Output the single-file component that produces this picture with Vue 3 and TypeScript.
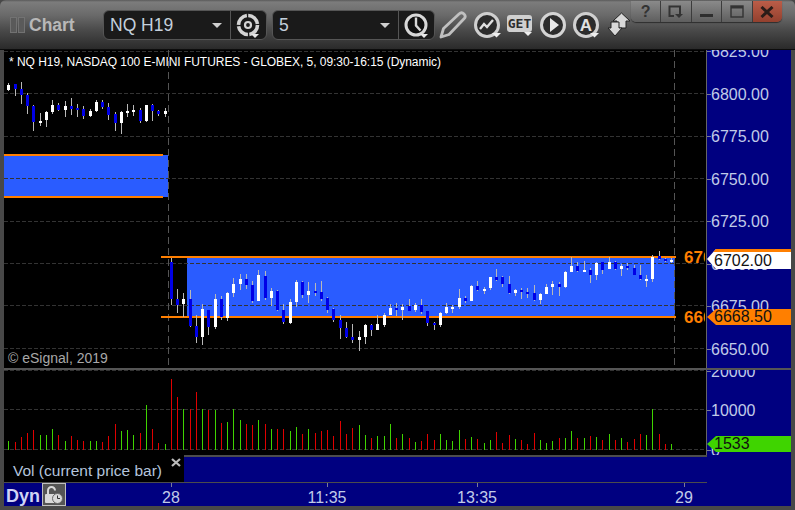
<script setup lang="ts">
type Raw = [number, number, number, number, number, number];
interface Candle { x: number; wt: number; wb: number; bt: number; bh: number; up: boolean }

function candles(ox: number, oy: number, rows: Raw[]): Candle[] {
  return rows.map(([x, wt, wb, bt, bb, w]) => ({
    x: Math.floor(ox + x / 3),
    wt: oy + wt / 3,
    wb: oy + wb / 3,
    bt: oy + bt / 3,
    bh: (bb - bt) / 3,
    up: w === 1,
  }));
}

const session1: Raw[] = [
  [25,39,63,45,60,1],[46,42,78,42,57,0],[64,36,102,57,75,0],[82,69,132,75,108,0],[100,105,183,108,156,0],
  [121,129,168,153,159,1],[139,123,171,126,150,1],[157,90,132,105,126,1],[175,99,123,105,120,0],[196,93,141,108,120,1],
  [214,84,135,108,117,0],[232,102,141,114,120,0],[250,108,147,117,138,0],[271,117,141,123,138,1],[289,90,126,96,123,1],
  [307,90,117,96,111,0],[325,99,150,111,135,0],[346,126,183,132,159,0],[364,123,192,126,159,1],[382,102,141,123,129,1],
  [400,105,138,120,126,1],[421,114,159,120,153,0],[439,105,156,105,153,1],[457,102,153,105,123,0],[475,120,138,123,132,0],
  [496,114,141,123,132,1],
];
const session2a: Raw[] = [
  [64,54,195,66,177,0],[82,147,219,177,195,0],[100,159,231,177,192,1],[121,150,261,177,258,0],[139,225,309,258,291,0],
  [157,192,315,207,291,1],[175,210,285,210,261,0],[196,162,267,177,261,1],[214,168,240,177,231,0],[232,156,243,159,234,1],
  [250,114,171,132,159,1],[271,102,150,117,132,1],[289,102,147,117,135,0],[307,123,189,135,183,0],[325,90,183,105,183,1],
  [346,93,180,108,174,0],[364,144,198,153,174,1],[382,150,213,153,210,0],[400,192,252,210,246,0],[421,177,252,186,249,1],
  [439,120,201,126,186,1],[457,123,174,126,165,0],[475,126,189,153,165,1],[496,129,168,153,159,0],[514,123,183,156,177,0],
  [532,171,219,174,210,0],[550,204,246,207,240,0],[571,225,297,240,264,0],[589,246,294,264,291,0],[607,252,309,291,300,0],
  [628,273,333,291,300,1],[646,252,312,255,291,1],[664,252,288,255,270,0],[682,225,270,252,270,1],[703,219,261,225,255,1],
  [721,192,225,204,225,1],[739,189,228,204,210,0],[757,192,240,201,210,1],[778,177,213,198,213,0],[796,189,216,195,210,1],
];
const session2b: Raw[] = [
  [4,177,222,195,216,0],[22,213,258,213,249,0],[43,246,270,249,255,0],[61,216,261,219,255,1],[79,189,222,201,219,1],
  [97,195,219,201,207,1],[118,147,207,174,201,1],[136,168,189,174,183,0],[154,135,183,138,183,1],[172,123,153,138,150,0],
  [193,141,162,147,153,1],[211,111,150,111,144,1],[229,87,123,111,120,0],[247,108,141,111,132,0],[268,108,162,132,159,0],
  [286,147,168,150,159,1],[304,144,177,150,156,0],[322,144,174,156,162,0],[343,135,183,159,180,0],[361,159,192,162,180,1],
  [379,132,162,141,162,1],[397,123,165,132,141,1],[418,126,168,132,141,0],[436,93,144,96,141,1],[454,51,96,78,96,1],
  [472,66,96,78,93,0],[493,63,96,90,96,1],[511,84,129,90,105,0],[529,66,120,69,105,1],[547,66,102,66,90,0],
  [568,51,87,66,87,1],[586,63,90,66,87,0],[604,72,108,78,87,1],[622,69,90,78,84,0],[643,75,105,84,105,0],
  [661,75,120,105,117,0],[679,105,141,117,123,1],[697,45,126,51,117,1],[718,33,60,48,57,0],[736,54,66,57,63,0],
  [754,54,69,60,66,1],
];
const allCandles: Candle[] = [
  ...candles(0, 70, session1),
  ...candles(150, 240, session2a),
  ...candles(420, 240, session2b),
];

type RawVol = [number, number, number];
function bars(ox: number, rows: RawVol[]) {
  return rows.map(([x, top, g]) => ({ x: Math.floor(ox + x / 3), y: 365 + top / 3, h: (255 - top) / 3, g: g === 1 }));
}
const volBars = [
  ...bars(0, [[25,228,1],[46,231,0],[64,216,0],[82,204,0],[100,195,0],[121,210,1],[139,210,1],[157,192,1],[175,210,0],[196,228,1],[214,213,0],[232,225,0],[250,228,0],[271,228,1],[289,228,1],[307,231,0],[325,213,0],[346,177,0],[364,198,1],[382,195,1],[400,210,1],[421,204,0],[439,120,1],[457,192,0],[475,234,0],[496,237,1],[514,42,0],[532,96,0],[550,132,1],[571,132,0],[589,81,0],[607,132,1],[625,135,0],[646,135,1],[664,174,0],[682,171,1],[700,132,1],[721,165,1],[739,177,0],[757,180,0],[775,165,1],[796,177,0]]),
  ...bars(265, [[19,192,1],[37,192,0],[55,192,0],[76,198,1],[94,186,1],[112,207,0],[130,192,1],[151,204,0],[169,198,0],[187,195,0],[205,213,0],[226,168,0],[244,207,0],[262,189,0],[283,180,1],[301,210,1],[319,219,0],[337,213,1],[358,213,1],[376,177,1],[394,219,0],[412,207,1],[433,219,0],[451,231,1],[469,228,0],[487,207,0],[508,225,0],[526,207,1],[544,225,1],[562,228,1],[583,195,1],[601,222,0],[619,216,1],[637,222,0],[658,234,1],[676,225,1],[694,201,0],[712,234,0],[733,210,0],[751,222,1],[769,225,0],[787,237,0],[808,204,0]]),
  ...bars(530, [[31,225,1],[49,234,1],[67,228,1],[88,219,0],[106,219,1],[124,198,1],[142,219,0],[163,219,1],[181,213,0],[199,216,1],[217,225,0],[238,207,1],[256,225,0],[274,219,1],[292,231,0],[313,222,0],[331,207,0],[349,210,1],[367,132,1],[388,207,0],[406,237,0],[424,237,1]]),
];

const priceGrid = [51, 93.5, 136, 178.5, 221, 263.5, 305.5, 348.5];
const priceLabels = [
  { t: '6825.00', y: 51 }, { t: '6800.00', y: 93.5 }, { t: '6775.00', y: 136 }, { t: '6750.00', y: 178.5 },
  { t: '6725.00', y: 221 }, { t: '6700.00', y: 263.5 }, { t: '6675.00', y: 305.5 }, { t: '6650.00', y: 348.5 },
];
const volLabels = [{ t: '20000', y: 370.5 }, { t: '10000', y: 409.5 }, { t: '0', y: 449.5 }];
const times = [{ t: '28', x: 171 }, { t: '11:35', x: 327 }, { t: '13:35', x: 477 }, { t: '29', x: 684 }];
</script>

<template>
  <div class="window">
    <header class="toolbar">
      <div class="brand">
        <i class="grip"></i><i class="grip"></i>
        <span class="brand-name">Chart</span>
      </div>
      <div class="combo combo-a">
        <span class="combo-text">NQ H19</span>
        <i class="caret"></i>
        <span class="combo-btn">
          <svg width="36" height="29" viewBox="0 0 36 29">
            <circle cx="18" cy="14" r="9.500" fill="none" stroke="#d4d4d4" stroke-width="3.600" stroke-dasharray="13.500 1.400" />
            <circle cx="18" cy="14" r="3" fill="none" stroke="#d4d4d4" stroke-width="2.200" />
            <path d="M21 23h8l-4 4z" fill="#e8e8e8" />
          </svg>
        </span>
      </div>
      <div class="combo combo-b">
        <span class="combo-text">5</span>
        <i class="caret"></i>
        <span class="combo-btn">
          <svg width="36" height="29" viewBox="0 0 36 29">
            <circle cx="18" cy="14" r="10" fill="#111" stroke="#d8d8d8" stroke-width="3" />
            <path d="M18 6.500v8l4.500 5" fill="none" stroke="#d8d8d8" stroke-width="2.400" />
            <path d="M22 23h8l-4 4z" fill="#e8e8e8" />
          </svg>
        </span>
      </div>
      <div class="tools">
        <svg width="33" height="32" viewBox="0 0 33 32">
          <path d="M5 26l2.500-8.500L23 3c1.600-1.500 3.500-1.500 5 0c1.500 1.500 1.500 3.300 0 4.800L13 23.500z" fill="none" stroke="#c0c0c0" stroke-width="2.800" stroke-linejoin="round" />
        </svg>
        <svg width="33" height="32" viewBox="0 0 33 32">
          <circle cx="18" cy="14" r="11.500" fill="#2c2c2c" stroke="#d0d0d0" stroke-width="3" />
          <path d="M11 18l4-5 3 3 6-7" fill="none" stroke="#e0e0e0" stroke-width="2.400" />
          <path d="M23 22h9l-4.500 4.500z" fill="#eee" />
        </svg>
        <svg width="33" height="32" viewBox="0 0 33 32">
          <rect x="5" y="4" width="25" height="17" rx="3" fill="#d0d0d0" />
          <text x="17.500" y="17" class="get-text" text-anchor="middle">GET</text>
          <path d="M22 21h8l-4 4z" fill="#eee" />
        </svg>
        <svg width="33" height="32" viewBox="0 0 33 32">
          <circle cx="18" cy="14" r="11.500" fill="#2c2c2c" stroke="#d4d4d4" stroke-width="3" />
          <path d="M15 7l9 7l-9 7z" fill="#e8e8e8" />
        </svg>
        <svg width="33" height="32" viewBox="0 0 33 32">
          <circle cx="18" cy="14" r="11.500" fill="#2c2c2c" stroke="#d0d0d0" stroke-width="3" />
          <text x="18" y="20" class="a-text" text-anchor="middle">A</text>
          <path d="M22 22h9l-4.500 4.500z" fill="#eee" />
        </svg>
        <svg width="33" height="32" viewBox="0 0 33 32">
          <path d="M20.500 2L29 10H25V17H16V10H12z" fill="#d8d8d8" stroke="#222" stroke-width="1" />
          <path d="M14 25L7 17H10V11H18V17H21z" fill="#d8d8d8" stroke="#222" stroke-width="1" />
        </svg>
      </div>
      <div class="win-btns">
        <button class="win-btn q">?</button>
        <button class="win-btn">
          <svg width="16" height="14" viewBox="0 0 16 14"><path d="M12 9V1.500H1.500V11H6" fill="none" stroke="#333" stroke-width="2" /><path d="M7 9h8l-4 4z" fill="#333" /></svg>
        </button>
        <button class="win-btn">
          <svg width="14" height="14" viewBox="0 0 14 14"><rect x="0" y="9" width="13" height="3" fill="#2e2e2e" /></svg>
        </button>
        <button class="win-btn">
          <svg width="14" height="14" viewBox="0 0 14 14"><rect x="1" y="1" width="12" height="11" fill="none" stroke="#333" stroke-width="1.400" /><rect x="1" y="1" width="12" height="2.500" fill="#333" /></svg>
        </button>
        <button class="win-btn close">
          <svg width="14" height="12" viewBox="0 0 14 12"><path d="M1.500 1l11 10M12.500 1l-11 10" stroke="#2a1c18" stroke-width="3" /></svg>
        </button>
      </div>
    </header>

    <div class="panes">
      <section class="price-pane">
        <svg class="canvas" width="703" height="318" viewBox="4 50 703 318" shape-rendering="crispEdges">
          <rect x="4" y="155" width="164" height="42" fill="#2a5cff" />
          <rect x="187" y="258" width="488" height="58" fill="#2a5cff" />
          <rect x="4" y="154" width="159" height="2" fill="#ff7f00" />
          <rect x="4" y="196" width="159" height="2" fill="#ff7f00" />
          <line v-for="y in priceGrid" :key="y" x1="4" x2="706" :y1="y" :y2="y" stroke="#333" stroke-dasharray="4 2" />
          <line x1="168.500" x2="168.500" y1="50" y2="368" stroke="#555" stroke-dasharray="7 4" />
          <line x1="674.500" x2="674.500" y1="50" y2="368" stroke="#555" stroke-dasharray="7 4" />
          <rect x="161" y="256" width="515" height="2" fill="#ff7f00" />
          <rect x="161" y="316" width="515" height="2" fill="#ff7f00" />
          <g v-for="(c, i) in allCandles" :key="i">
            <rect :x="c.x" :y="c.wt" width="1" :height="c.wb - c.wt" fill="#b8b8b8" />
            <rect :x="c.x - 1" :y="c.bt" width="3" :height="c.bh" :fill="c.up ? '#ffffff' : '#0000e6'" />
          </g>
        </svg>
        <div class="study-title">* NQ H19, NASDAQ 100 E-MINI FUTURES - GLOBEX, 5, 09:30-16:15 (Dynamic)</div>
        <div class="copyright">© eSignal, 2019</div>
        <div class="level level-hi">670</div>
        <div class="level level-lo">666</div>
      </section>
      <aside class="price-axis">
        <span v-for="l in priceLabels" :key="l.t" class="axis-label" :style="{ top: l.y - 50 - 9 + 'px' }">{{ l.t }}</span>
        <i v-for="l in priceLabels" :key="'t' + l.t" class="tick" :style="{ top: l.y - 50 + 'px' }"></i>
        <div class="tag tag-white"><span>6702.00</span></div>
        <div class="tag tag-orange"><span>6668.50</span></div>
      </aside>

      <div class="divider"></div>

      <section class="vol-pane">
        <svg class="canvas" width="703" height="85" viewBox="4 370 703 85" shape-rendering="crispEdges">
          <line x1="4" x2="706" y1="370.500" y2="370.500" stroke="#333" stroke-dasharray="4 2" />
          <line x1="4" x2="706" y1="409.500" y2="409.500" stroke="#333" stroke-dasharray="4 2" />
          <line x1="4" x2="706" y1="449.500" y2="449.500" stroke="#333" stroke-dasharray="4 2" />
          <rect v-for="(b, i) in volBars" :key="i" :x="b.x" :y="b.y" width="1" :height="b.h" :fill="b.g ? '#3fd400' : '#e00000'" />
        </svg>
      </section>
      <aside class="vol-axis">
        <span v-for="l in volLabels" :key="l.t" class="axis-label" :style="{ top: l.y - 370 - 9 + 'px' }">{{ l.t }}</span>
        <i v-for="l in volLabels" :key="'t' + l.t" class="tick" :style="{ top: l.y - 370 + 'px' }"></i>
        <div class="tag tag-green"><span>1533</span></div>
      </aside>

      <div class="legend">
        <div class="legend-name">
          <span>Vol (current price bar)</span>
          <svg class="legend-x" width="10" height="9" viewBox="0 0 10 9"><path d="M1 1l8 7M9 1l-8 7" stroke="#bbb" stroke-width="2.200" /></svg>
        </div>
        <div class="legend-fill"></div>
      </div>
      <div class="legend-side"></div>

      <div class="time-axis">
        <span class="dyn">Dyn</span>
        <span class="lock">
          <svg width="22" height="20" viewBox="0 0 22 20">
            <path d="M5 9V5.500a3.500 3.500 0 0 1 7 0" fill="none" stroke="#d8d8d8" stroke-width="2" />
            <rect x="2" y="9" width="10" height="9" rx="1" fill="#d8d8d8" />
            <circle cx="14.500" cy="13.500" r="5" fill="#d8d8d8" stroke="#666" />
            <path d="M14.500 10.500v3h2.500" fill="none" stroke="#333" />
          </svg>
        </span>
        <template v-for="t in times" :key="t.t">
          <i class="time-tick" :style="{ left: t.x - 4 + 'px' }"></i>
          <span class="time-label" :style="{ left: t.x - 4 + 'px' }">{{ t.t }}</span>
        </template>
      </div>
    </div>
  </div>
</template>

<style scoped>
.window {
  width: 795px;
  height: 510px;
  background: #484848;
  position: relative;
  overflow: hidden;
  font-family: "Liberation Sans", Arial, sans-serif;
}
.toolbar {
  height: 50px;
  box-sizing: border-box;
  padding-top: 10px;
  display: flex;
  align-items: flex-start;
  background: linear-gradient(#5a5a5a 0, #7c7c7c 2px, #6a6a6a 15px, #4a4a4a 30px, #2a2a2a 49px);
  border-bottom: 1px solid #0c0c0c;
  border-radius: 6px 6px 0 0;
}
.brand {
  width: 103px;
  height: 30px;
  padding-left: 10px;
  box-sizing: border-box;
  display: flex;
  align-items: center;
  gap: 1px;
}
.grip {
  width: 5px;
  height: 14px;
  border: 1px solid #727272;
  background: #5a5a5a;
}
.brand-name {
  margin-left: 3px;
  font-weight: bold;
  font-size: 17.500px;
  color: #b8b8b8;
}
.combo {
  height: 30px;
  box-sizing: border-box;
  background: #1a1a1a;
  border: 1px solid #555;
  border-radius: 6px;
  display: flex;
  align-items: center;
  position: relative;
}
.combo-a { width: 164px; margin-right: 5px; }
.combo-b { width: 163px; }
.combo-text {
  margin-left: 6px;
  font-size: 17.500px;
  color: #c4d0dc;
}
.caret {
  position: absolute;
  top: 12px;
  width: 0;
  height: 0;
  border-left: 5px solid transparent;
  border-right: 5px solid transparent;
  border-top: 5px solid #d0d0d0;
}
.combo-a .caret { left: 108px; }
.combo-b .caret { left: 107px; }
.combo-btn {
  margin-left: auto;
  width: 36px;
  height: 28px;
  border-left: 1px solid #555;
  box-sizing: border-box;
  display: block;
}
.combo-btn svg { display: block; margin-left: -1px; }
.tools {
  display: flex;
  margin-left: 1px;
  margin-top: 1px;
}
.tools svg { display: block; flex: none; }
.get-text {
  font-family: "DejaVu Sans Mono", monospace;
  font-weight: bold;
  font-size: 13px;
  fill: #2e2e2e;
}
.a-text {
  font-family: "Liberation Sans", sans-serif;
  font-weight: bold;
  font-size: 17px;
  fill: #e0e0e0;
}
.win-btns {
  position: absolute;
  top: 1px;
  left: 631px;
  display: flex;
  width: 151px;
  height: 21px;
  border-radius: 0 0 5px 5px;
  overflow: hidden;
  box-shadow: 0 1px 1px rgba(0, 0, 0, 0.5);
}
.win-btn {
  flex: 1;
  padding: 0;
  border: 0;
  border-right: 1px solid #3c3c3c;
  background: linear-gradient(#8a8a8a, #5e5e5e);
  display: flex;
  align-items: center;
  justify-content: center;
  font-family: "Liberation Sans", sans-serif;
}
.win-btn.q { font-size: 16px; font-weight: bold; color: #333; }
.win-btn.close { background: linear-gradient(#bb5d48, #93402e); border-right: 0; }

.panes {
  margin: 0 4px;
  display: grid;
  grid-template-columns: 703px 84px;
  grid-template-rows: 318px 2px 85px 29px 22px;
}
.price-pane, .vol-pane {
  background: #000;
  position: relative;
  overflow: hidden;
}
.canvas { display: block; }
.price-axis, .vol-axis {
  background: #000080;
  position: relative;
  overflow: hidden;
  border-left: 1px solid #666;
  margin-left: -1px;
}
.axis-label {
  position: absolute;
  left: 4px;
  height: 20px;
  line-height: 20px;
  font-size: 16px;
  color: #c0cbe8;
}
.tick {
  position: absolute;
  left: 0;
  width: 4px;
  height: 1px;
  background: #7a7a9a;
}
.study-title {
  position: absolute;
  left: 5px;
  top: 5px;
  font-size: 12px;
  letter-spacing: -0.04px;
  line-height: 14px;
  color: #fff;
  white-space: nowrap;
}
.copyright {
  position: absolute;
  left: 4px;
  top: 300px;
  font-size: 14px;
  line-height: 16px;
  color: #a8a8a8;
}
.level {
  position: absolute;
  left: 680px;
  width: 21px;
  overflow: hidden;
  font-size: 17px;
  font-weight: bold;
  line-height: 20px;
  color: #ff7f00;
  white-space: nowrap;
}
.level-hi { top: 198px; }
.level-lo { top: 258px; }
.tag {
  position: absolute;
  left: 0;
  width: 84px;
  box-sizing: border-box;
  padding-left: 7px;
  display: flex;
  align-items: center;
  font-size: 16px;
  color: #111;
  clip-path: polygon(9px 0, 100% 0, 100% 100%, 9px 100%, 0 50%);
}
.tag-white {
  top: 199px;
  height: 20px;
  background: #fff;
  border-top: 3px solid #ff7f00;
}
.tag-orange {
  top: 259px;
  height: 16px;
  background: #ff7f00;
}
.tag-green {
  top: 66px;
  height: 16px;
  background: #3fd400;
}
.divider {
  grid-column: 1 / span 2;
  background: #555;
}
.legend {
  display: flex;
  border-right: 1px solid #666;
  margin-right: -1px;
  border-bottom: 2px solid #4c4c4c;
  box-sizing: border-box;
}
.legend-name {
  width: 180px;
  background: #000;
  position: relative;
  box-sizing: border-box;
  padding: 6px 0 0 9px;
  font-size: 15.500px;
  line-height: 19px;
  color: #b4c4dc;
}
.legend-x {
  position: absolute;
  left: 167px;
  top: 3px;
}
.legend-fill {
  flex: 1;
  background: #000080;
  border-top: 2px solid #4c4c4c;
}
.legend-side { background: #000080; }
.time-axis {
  grid-column: 1 / span 2;
  background: #000080;
  position: relative;
  display: flex;
  align-items: center;
  margin-top: -1px;
}
.dyn {
  margin-left: 2px;
  padding-top: 3px;
  font-size: 18px;
  font-weight: bold;
  color: #d0d4f4;
  width: 36px;
}
.lock {
  width: 24px;
  height: 23px;
  box-sizing: border-box;
  background: #555;
  border: 1px solid #c0c0c0;
  display: flex;
  align-items: center;
  justify-content: center;
}
.time-tick {
  position: absolute;
  top: 0;
  width: 1px;
  height: 4px;
  background: #7a7a9a;
}
.time-label {
  position: absolute;
  top: 6px;
  transform: translateX(-50%);
  font-size: 16px;
  line-height: 18px;
  color: #c0cbe8;
}
</style>
